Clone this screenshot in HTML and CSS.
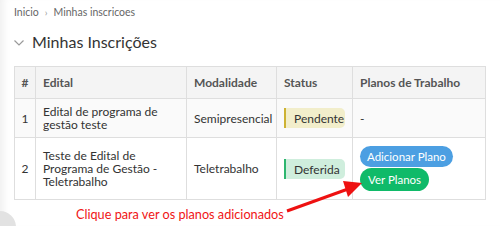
FILE: index.html
```html
<!DOCTYPE html>
<html lang="pt-BR">
<head>
<meta charset="utf-8">
<link rel="stylesheet" href="styles.css">
</head>
<body>
<div class="page">
  <nav class="crumbs">
    <span>Inicio</span>
    <span class="sep">›</span>
    <span>Minhas inscricoes</span>
  </nav>
  <h1 class="title">
    <svg class="chev" width="10" height="6" viewBox="0 0 10 6"><path d="M0.5 0.5 L5 5 L9.5 0.5" fill="none" stroke="#9a9a9a" stroke-width="1.2"/></svg>
    <span>Minhas Inscrições</span>
  </h1>
  <table class="grid">
    <colgroup>
      <col class="c-num"><col class="c-edital"><col class="c-mod"><col class="c-status"><col class="c-planos">
    </colgroup>
    <thead>
      <tr><th class="num">#</th><th>Edital</th><th>Modalidade</th><th>Status</th><th>Planos de Trabalho</th></tr>
    </thead>
    <tbody>
      <tr class="odd">
        <td class="num">1</td>
        <td>Edital de programa de gestão teste</td>
        <td>Semipresencial</td>
        <td><span class="badge pend">Pendente</span></td>
        <td>-</td>
      </tr>
      <tr>
        <td class="num">2</td>
        <td>Teste de Edital de Programa de Gestão - Teletrabalho</td>
        <td>Teletrabalho</td>
        <td><span class="badge def">Deferida</span></td>
        <td>
          <div class="btns">
            <span class="btn blue">Adicionar Plano</span>
            <span class="btn green">Ver Planos</span>
          </div>
        </td>
      </tr>
    </tbody>
  </table>
  <p class="note">Clique para ver os planos adicionados</p>
</div>
<svg class="arrow" width="500" height="226" viewBox="0 0 500 226">
  <line x1="287" y1="211" x2="348" y2="189" stroke="#ee1111" stroke-width="3"/>
  <polygon points="362,183 343,181 348,197" fill="#ee1111"/>
</svg>
<div class="fab"></div>
</body>
</html>
```
FILE: styles.css
```css
html, body {
  margin: 0;
  padding: 0;
}
body {
  width: 500px;
  height: 226px;
  overflow: hidden;
  background: #fff;
  font-family: Lato, "Open Sans", sans-serif;
  color: #333;
  box-shadow: inset 9px 0 8px -6px rgba(0, 0, 0, 0.07);
  position: relative;
}
.page {
  padding: 5px 15px 0 14px;
}
.crumbs {
  font-size: 10.5px;
  color: #666;
  line-height: 14px;
  display: flex;
  align-items: center;
  gap: 6px;
}
.crumbs .sep {
  font-size: 10px;
  color: #999;
}
.title {
  margin: 13px 0 0 0;
  font-weight: 400;
  font-size: 16px;
  line-height: 20px;
  color: #333;
  display: flex;
  align-items: center;
  gap: 8px;
}
.chev {
  margin-top: 2px;
}
.grid {
  margin-top: 14px;
  width: 471px;
  table-layout: fixed;
  border-collapse: collapse;
  font-size: 12px;
  line-height: 13px;
}
.c-num { width: 21px; }
.c-edital { width: 151px; }
.c-mod { width: 90px; }
.c-status { width: 76px; }
.c-planos { width: 133px; }
.grid th, .grid td {
  border: 1px solid #dedede;
  padding: 6px 7px;
  text-align: left;
  vertical-align: middle;
}
.grid th {
  background: #f4f4f4;
  color: #555;
  font-weight: 700;
  padding: 9px 7px;
}
.grid .num {
  text-align: center;
  padding: 6px 2px;
}
.grid th.num { padding: 9px 2px; }
.grid td {
  background: #fff;
}
.grid tr.odd td {
  background: #fafafa;
}
.badge {
  display: inline-block;
  width: 51px;
  padding: 4px 0 3px 8px;
  line-height: 13px;
  font-size: 12px;
  border-radius: 0 5px 5px 0;
}
.pend {
  background: #f2eecb;
  border-left: 2px solid #cdb232;
}
.def {
  background: #cfeedd;
  border-left: 2px solid #2cb66e;
}
.btns {
  display: flex;
  flex-direction: column;
  align-items: flex-start;
  gap: 1px;
  padding: 2px 0 2px;
}
.btn {
  display: inline-block;
  color: #fff;
  font-size: 11.5px;
  line-height: 13px;
  padding: 4px 7px;
  border-radius: 11px;
}
.blue { background: #4c9fe2; }
.green {
  background: #0fba69;
  padding: 5px 8px;
  border-radius: 12px;
}
.note {
  margin: 6px 0 0 62px;
  color: #f01515;
  font-size: 12.7px;
  line-height: 16px;
}
.arrow {
  position: absolute;
  left: 0;
  top: 0;
  pointer-events: none;
}
.fab {
  position: absolute;
  left: -16px;
  top: 211px;
  width: 32px;
  height: 32px;
  border-radius: 50%;
  background: #e2e2e2;
}
```
